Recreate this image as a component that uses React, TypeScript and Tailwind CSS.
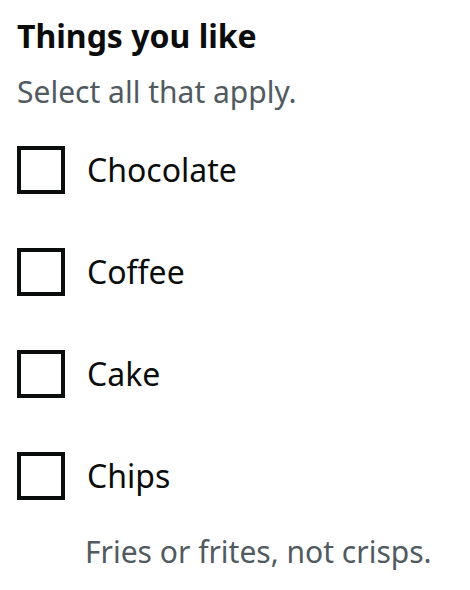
import React from "react";

const items = ["Chocolate", "Coffee", "Cake", "Chips"];

export default function App() {
  return (
    <div className="w-[470px] h-[590px] bg-white text-[#0b0c0c] pl-[17px] pt-[16px]" style={{ fontFamily: '"Noto Sans", sans-serif' }}>
      <h1 className="text-[32px] font-bold leading-[40px]">Things you like</h1>
      <p className="text-[30px] leading-[40px] text-[#505a5f] mt-[16px]">Select all that apply.</p>
      <div className="mt-[34px] flex flex-col gap-[54px]">
        {items.map((it) => (
          <label key={it} className="flex items-center h-[48px]">
            <span className="w-[48px] h-[48px] border-[4px] border-[#0b0c0c] shrink-0" />
            <span className="ml-[22px] text-[32px] leading-[40px]">{it}</span>
          </label>
        ))}
      </div>
      <p className="ml-[68px] mt-[32px] text-[30px] leading-[40px] text-[#505a5f]">Fries or frites, not crisps.</p>
    </div>
  );
}
